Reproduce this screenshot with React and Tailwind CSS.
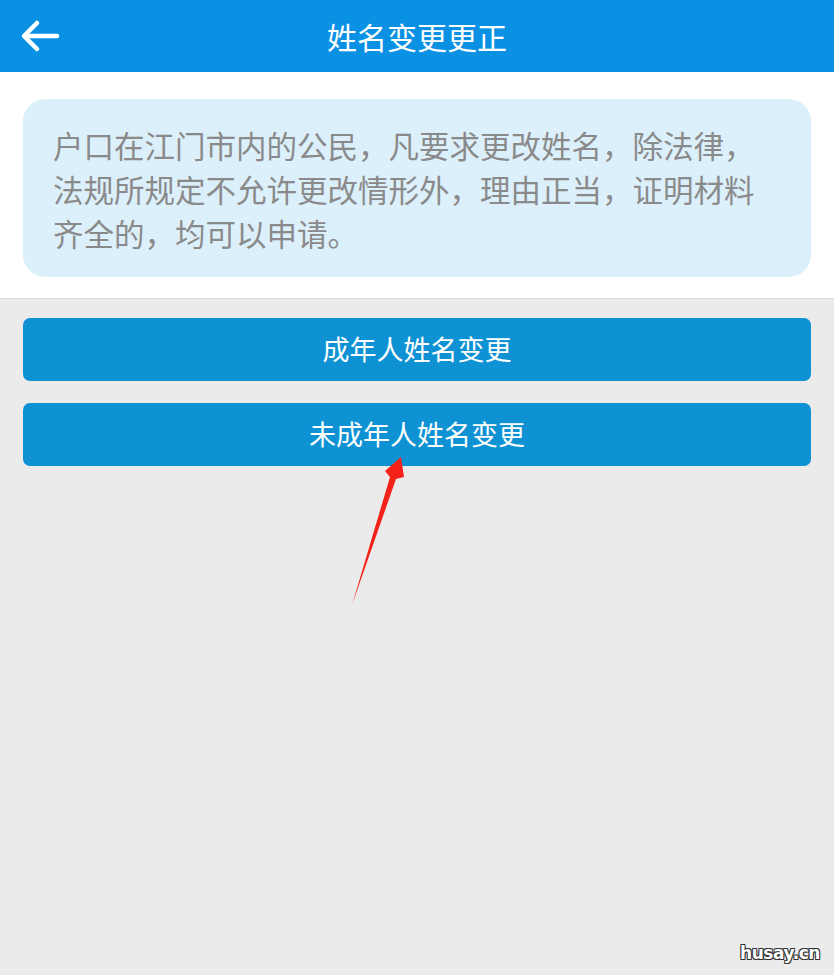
import React from "react";

const cjk = { fontFamily: '"Noto Sans CJK SC", "Noto Sans", sans-serif' };

function BackArrow() {
  return (
    <svg width="40" height="34" viewBox="0 0 40 34" fill="none">
      <path d="M37 17H5" stroke="white" strokeWidth="4.5" strokeLinecap="round" />
      <path d="M17 4L4 17L17 30" stroke="white" strokeWidth="4.5" strokeLinecap="round" strokeLinejoin="round" />
    </svg>
  );
}

export default function App() {
  const options = ["成年人姓名变更", "未成年人姓名变更"];

  return (
    <div className="relative w-full h-[975px] overflow-hidden bg-[#ebebeb]" style={cjk}>
      {/* top bar */}
      <header className="relative h-[72px] bg-[#0a91e4] flex items-center justify-center">
        <button className="absolute left-[20px] top-[19px]">
          <BackArrow />
        </button>
        <h1 className="text-white text-[30px] leading-none">姓名变更更正</h1>
      </header>

      {/* notice */}
      <section className="bg-white pt-[27px] pb-[21px] px-[23px] border-b border-[#dadada]">
        <div className="bg-[#dcf0fc] rounded-[22px] pt-[24px] pb-[22px] px-[30px] text-[#8a8a8a] text-[30.5px] leading-[44px]">
          <p>户口在江门市内的公民，凡要求更改姓名，除法律，</p>
          <p>法规所规定不允许更改情形外，理由正当，证明材料</p>
          <p>齐全的，均可以申请。</p>
        </div>
      </section>

      {/* options */}
      <div className="px-[23px] pt-[19px] flex flex-col gap-[22px]">
        {options.map((label) => (
          <button
            key={label}
            className="h-[63px] w-full rounded-[7px] bg-[#0e92d4] text-white text-[27px] flex items-center justify-center"
          >
            {label}
          </button>
        ))}
      </div>

      {/* red annotation arrow */}
      <svg className="absolute left-0 top-0 pointer-events-none" width="834" height="975">
        <path d="M352 605 L390 477 L385 471 L401 457 L404 477 L396 479 Z" fill="#f5221a" />
      </svg>

      {/* watermark */}
      <div
        className="absolute right-[14px] bottom-[9px] text-white font-bold text-[17px] tracking-tight [text-shadow:1px_1px_0_#333,-1px_-1px_0_#333,1px_-1px_0_#333,-1px_1px_0_#333]"
        style={{ fontFamily: '"DejaVu Sans", Arial, sans-serif' }}
      >
        husay.cn
      </div>
    </div>
  );
}
